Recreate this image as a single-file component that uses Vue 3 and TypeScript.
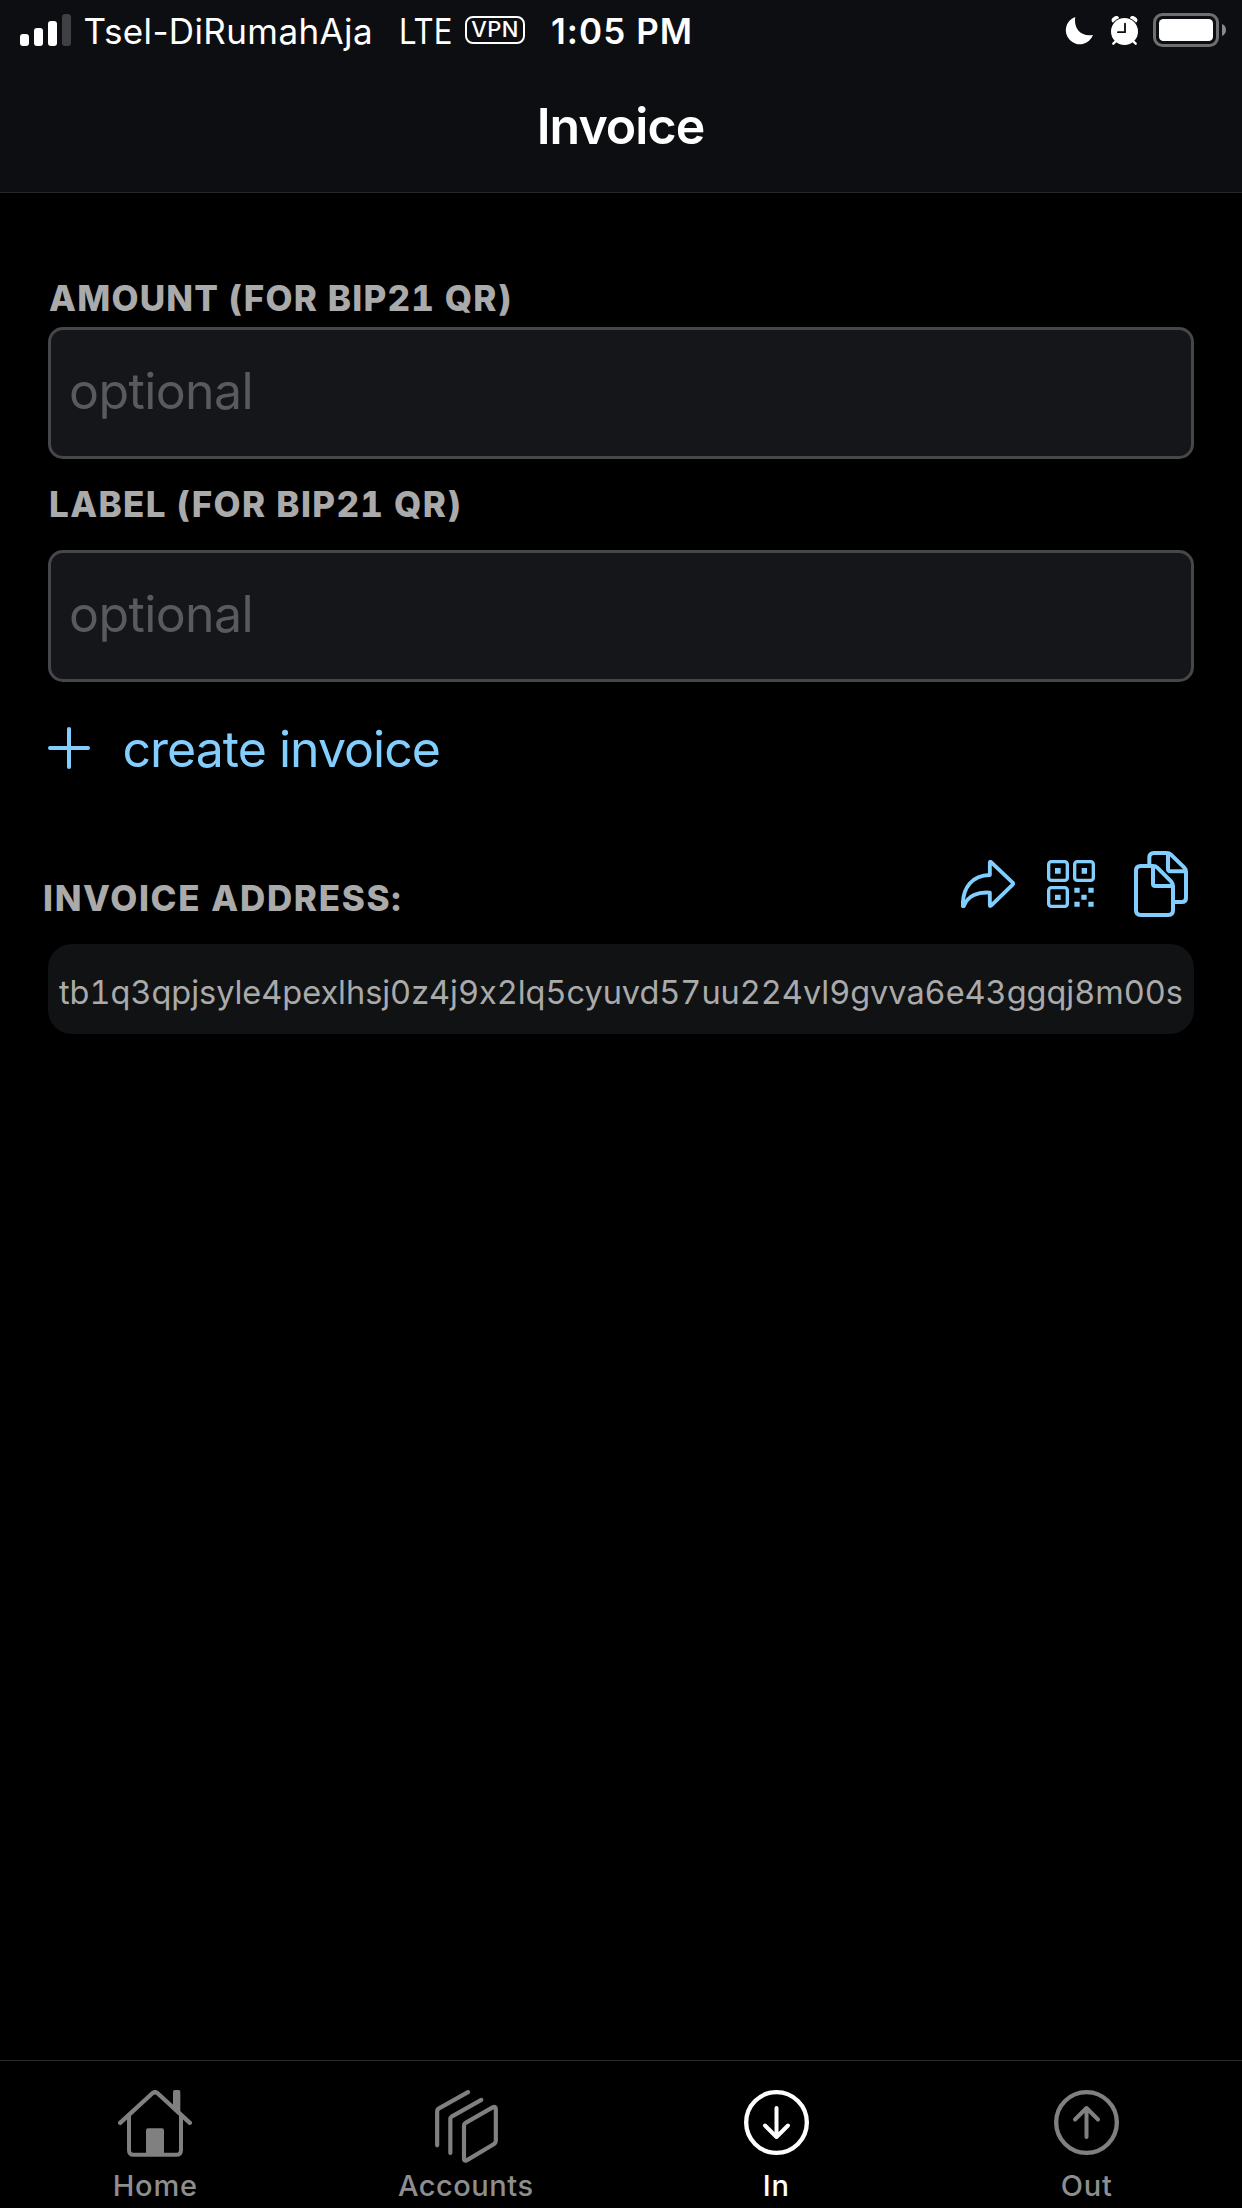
<script setup lang="ts">
import { ref } from 'vue'

interface Tab {
  id: 'home' | 'accounts' | 'in' | 'out'
  label: string
}

const tabs: Tab[] = [
  { id: 'home', label: 'Home' },
  { id: 'accounts', label: 'Accounts' },
  { id: 'in', label: 'In' },
  { id: 'out', label: 'Out' },
]

const activeTab = ref<Tab['id']>('in')
const amount = ref('')
const label = ref('')
const address = 'tb1q3qpjsyle4pexlhsj0z4j9x2lq5cyuvd57uu224vl9gvva6e43ggqj8m00s'
</script>

<template>
  <div class="screen">
    <header class="header">
      <div class="status">
        <svg class="signal" viewBox="0 0 51 32" width="51" height="32">
          <rect x="0" y="20" width="9" height="12" rx="3" fill="#fff" />
          <rect x="14" y="14" width="9" height="18" rx="3" fill="#fff" />
          <rect x="28" y="7" width="9" height="25" rx="3" fill="#fff" />
          <rect x="42" y="0" width="9" height="32" rx="3" fill="#3f4042" />
        </svg>
        <span class="carrier">Tsel-DiRumahAja</span>
        <span class="network">LTE</span>
        <span class="vpn">VPN</span>
        <span class="time">1:05 PM</span>
        <div class="indicators">
          <svg class="moon" viewBox="0 0 85 85" width="28.3" height="28.3">
            <path d="M31 0C25 32 46 61 84 54A42 42 0 1 1 31 0Z" fill="#fff" />
          </svg>
          <svg class="alarm" viewBox="0 0 81 87" width="27" height="29">
            <ellipse cx="13" cy="10" rx="12" ry="8.5" transform="rotate(-35 13 10)" fill="#fff" />
            <ellipse cx="68" cy="10" rx="12" ry="8.5" transform="rotate(35 68 10)" fill="#fff" />
            <circle cx="40.5" cy="46.5" r="43" fill="#0d0e12" />
            <path d="M14 76L7 83M67 76L74 83" stroke="#fff" stroke-width="7" stroke-linecap="round" />
            <circle cx="40.5" cy="46.5" r="40.5" fill="#fff" />
            <path d="M42 23V48.500H21" fill="none" stroke="#0d0e12" stroke-width="5.500" stroke-linecap="round" stroke-linejoin="round" />
          </svg>
          <svg class="battery" viewBox="0 0 219 102" width="73" height="34">
            <rect x="4.500" y="4.500" width="189" height="93" rx="24" fill="none" stroke="#6e6f71" stroke-width="9" />
            <rect x="18" y="18" width="162" height="66" rx="13" fill="#fff" />
            <path d="M207 33C215 36 219 43 219 51S215 66 207 69Z" fill="#88898a" />
          </svg>
        </div>
      </div>
      <h1 class="title">Invoice</h1>
    </header>

    <main class="content">
      <label class="caption amount-caption" for="amount">AMOUNT (FOR BIP21 QR)</label>
      <input id="amount" v-model="amount" class="field" type="text" placeholder="optional" />
      <label class="caption label-caption" for="label">LABEL (FOR BIP21 QR)</label>
      <input id="label" v-model="label" class="field" type="text" placeholder="optional" />

      <button class="create" type="button">
        <svg viewBox="0 0 42 42" width="42" height="42">
          <path d="M21 2V40M2 21H40" fill="none" stroke="currentColor" stroke-width="4" stroke-linecap="round" />
        </svg>
        <span>create invoice</span>
      </button>

      <div class="address-head">
        <h2 class="caption address-caption">INVOICE ADDRESS:</h2>
        <div class="actions">
          <svg class="share" viewBox="0 0 162 144" width="54" height="48">
            <path
              d="M86.500 8Q86.500 3 91 7L155 68Q158 71 155 74L91 136Q86.500 140 86.500 136V98C52 95 20 107 8.500 138Q5 140 5.500 136C5 82 34 46 86.500 45Z"
              fill="none" stroke="currentColor" stroke-width="11.500" stroke-linejoin="round" />
          </svg>
          <svg class="qr" viewBox="0 0 144 144" width="48" height="48">
            <g fill="none" stroke="currentColor" stroke-width="10">
              <rect x="5" y="5" width="56" height="56" rx="8" />
              <rect x="83" y="5" width="56" height="56" rx="8" />
              <rect x="5" y="83" width="56" height="56" rx="8" />
            </g>
            <path
              d="M24 24h17v17H24zM104 24h16v17h-16zM24 104h17v16H24zM82 83h16v15H82zM124 83h16v15h-16zM103 104h16v15h-16zM82 125h16v15H82zM124 125h16v15h-16z"
              fill="currentColor" />
          </svg>
          <svg class="copy" viewBox="0 0 162 198" width="54" height="66">
            <g fill="none" stroke="currentColor" stroke-width="12" stroke-linejoin="round">
              <path d="M46 42V20Q46 6 60 6H98Q106 6 111 11L151 50Q156 55 156 63V140Q156 153 143 153H123" />
              <path d="M102 8V54Q102 60.500 109 60.500H154" />
              <path d="M20 45H57Q65 45 70 50L112 92Q117 98 117 106V178Q117 192 103 192H20Q6 192 6 178V59Q6 45 20 45Z" />
              <path d="M57 47V98Q57 105 64 105H116" />
            </g>
          </svg>
        </div>
      </div>
      <div class="address">{{ address }}</div>
    </main>

    <nav class="tabs">
      <button
        v-for="tab in tabs" :key="tab.id" type="button" class="tab"
        :class="[tab.id, { active: tab.id === activeTab }]" @click="activeTab = tab.id">
        <span class="tab-icon">
          <svg v-if="tab.id === 'home'" viewBox="0 0 222 201" width="74" height="67">
            <g fill="none" stroke="currentColor" stroke-width="13" stroke-linecap="round" stroke-linejoin="round">
              <path d="M6.500 98.500L104 9Q111 4 118 9L215.500 98.500" />
              <path d="M33 78V180Q33 194.500 47 194.500H175Q189 194.500 189 180V78" stroke-width="12" stroke-linecap="butt" />
            </g>
            <path d="M84 196V121Q84 115 90 115H132Q138 115 138 121V196Z" fill="currentColor" />
            <path d="M165 50V5Q165 0 170 0H182Q187 0 187 5V70Z" fill="currentColor" />
          </svg>
          <svg v-else-if="tab.id === 'accounts'" viewBox="0 0 189 219" width="63" height="73">
            <g fill="none" stroke="currentColor" stroke-width="12.500" stroke-linecap="round" stroke-linejoin="round">
              <path d="M99 6.500L12 55Q6.500 58 6.500 65V166" />
              <path d="M139 29.500L51 79Q46 82 46 89V189" />
              <path d="M93 98L173 52Q182.500 48 182.500 57V151Q182.500 159 176 163L95 211Q87 215 87 206V108Q87 101 93 98Z" />
            </g>
          </svg>
          <svg v-else viewBox="0 0 195 195" width="65" height="65">
            <circle cx="97.500" cy="97.500" r="91" fill="none" stroke="currentColor" stroke-width="13" />
            <path
              :d="tab.id === 'in' ? 'M97.500 54V141M63 106.500L97.500 141L132 106.500' : 'M97.500 141V54M63 88.500L97.500 54L132 88.500'"
              fill="none" stroke="currentColor" stroke-width="12" stroke-linecap="round" stroke-linejoin="round" />
          </svg>
        </span>
        <span class="tab-label">{{ tab.label }}</span>
      </button>
    </nav>
  </div>
</template>

<style>
body {
  background: #000;
}
</style>

<style scoped>
.screen {
  display: flex;
  flex-direction: column;
  width: 1242px;
  height: 2208px;
  overflow: hidden;
  background: #000;
  color: #fff;
  font-family: Inter, "Liberation Sans", sans-serif;
}

.screen * {
  box-sizing: border-box;
}

svg {
  display: block;
  flex: none;
}

button {
  padding: 0;
  border: 0;
  background: none;
  font-family: inherit;
}

.header {
  height: 193px;
  border-bottom: 1px solid #262728;
  background: #0d0e12;
}

.status {
  display: flex;
  align-items: center;
  height: 63px;
  padding-left: 20px;
  font-size: 35px;
  line-height: 63px;
  white-space: nowrap;
}

.signal {
  margin-top: -3px;
}

.carrier {
  width: 314.5px;
  margin-left: 12.5px;
  letter-spacing: 0.38px;
}

.network {
  width: 67px;
  margin-left: 0.5px;
  transform: scaleX(0.89);
  transform-origin: left;
}

.vpn {
  width: 60px;
  height: 28px;
  margin: -3px 0 0 -0.5px;
  border: 2.5px solid #fff;
  border-radius: 8px;
  font-size: 22px;
  font-weight: 500;
  line-height: 23px;
  letter-spacing: 0.4px;
  text-align: center;
}

.time {
  margin-left: 26px;
  font-weight: 600;
  letter-spacing: 1.05px;
}

.indicators {
  display: flex;
  align-items: center;
  margin-left: auto;
  padding-right: 16px;
}

.moon {
  margin-right: 17.7px;
}

.alarm {
  margin: -2px 15px 0 0;
}

.battery {
  margin-top: -3px;
}

.title {
  height: 127px;
  margin: 0;
  padding-right: 1px;
  font-size: 50px;
  font-weight: 600;
  line-height: 126px;
  letter-spacing: -0.95px;
  text-align: center;
}

.content {
  flex: 1;
  padding: 0 48px;
}

.caption {
  display: block;
  margin: 0;
  color: #aaa;
  font-size: 35px;
  font-weight: 800;
  line-height: 50px;
  white-space: nowrap;
  font-variant-numeric: tabular-nums;
  word-spacing: -1px;
}

.amount-caption {
  margin: 80px 0 4px 1px;
  letter-spacing: 1.22px;
}

.label-caption {
  margin: 20px 0 21px 1px;
  letter-spacing: 1.36px;
}

.field {
  display: block;
  width: 100%;
  height: 132px;
  padding: 0 18px 5px;
  border: 3px solid #464749;
  border-radius: 15px;
  outline: 0;
  background: #15161a;
  color: #fff;
  font-family: inherit;
  font-size: 50px;
  letter-spacing: -0.6px;
}

.field::placeholder {
  color: #59595e;
  opacity: 1;
}

.create {
  display: flex;
  align-items: center;
  height: 60px;
  margin-top: 36px;
  color: #82cfff;
  font-size: 50px;
  line-height: 60px;
  letter-spacing: -0.98px;
  white-space: nowrap;
}

.create span {
  margin: 2px 0 0 32.5px;
}

.address-head {
  display: flex;
  justify-content: space-between;
  height: 93px;
  margin-top: 73px;
}

.address-caption {
  margin: 22px 0 0 -5px;
  letter-spacing: 1.66px;
}

.actions {
  display: flex;
  align-items: flex-start;
  padding-right: 6px;
  color: #82cfff;
}

.share {
  margin: 9px 32px 0 0;
}

.qr {
  margin: 9px 39px 0 0;
}

.address {
  height: 90px;
  padding-left: 11px;
  border-radius: 24px;
  background: #111214;
  color: #aaa;
  font-size: 32.5px;
  line-height: 98px;
  letter-spacing: -0.03px;
  white-space: nowrap;
  font-variant-numeric: tabular-nums;
}

.tabs {
  display: grid;
  grid-template-columns: repeat(4, 1fr);
  height: 148px;
  border-top: 1px solid #2b2b2c;
}

.tab {
  display: flex;
  flex-direction: column;
  align-items: center;
  color: #808080;
}

.tab-icon {
  height: 78px;
  padding-top: 29px;
}

.accounts .tab-icon {
  margin-left: 1px;
}

.tab-label {
  height: 40px;
  margin-top: 16px;
  color: #8e8e8e;
  font-size: 29px;
  font-weight: 500;
  line-height: 62px;
  letter-spacing: 0.8px;
}

.accounts .tab-label {
  letter-spacing: 0.52px;
}

.active,
.active .tab-label {
  color: #fff;
}
</style>
